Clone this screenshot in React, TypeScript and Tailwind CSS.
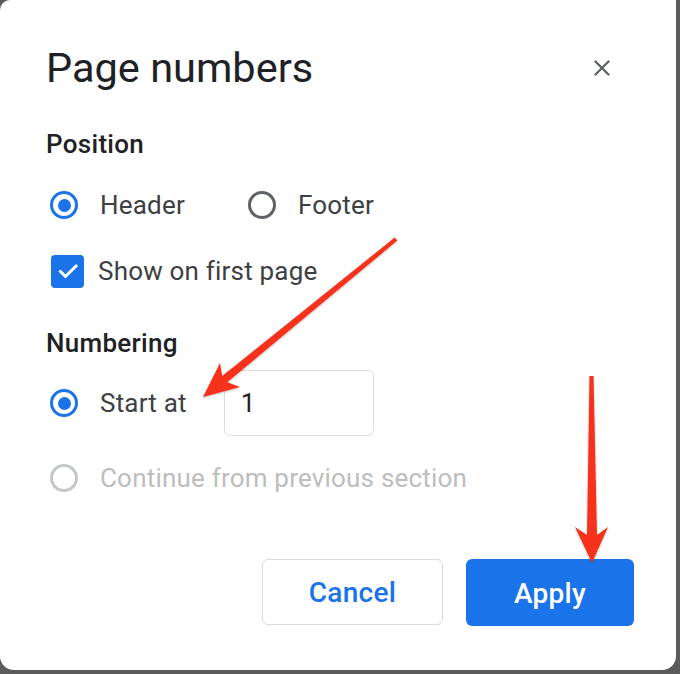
import { X } from "lucide-react";

function Radio({ state }: { state: "on" | "off" | "disabled" }) {
  const ring =
    state === "on"
      ? "border-[#1a73e8]"
      : state === "off"
      ? "border-[#5f6368]"
      : "border-[#c4c7c9]";
  return (
    <span
      className={`ml-[4px] flex h-[28px] w-[28px] shrink-0 items-center justify-center rounded-full border-[3px] ${ring}`}
    >
      {state === "on" && <span className="h-[13px] w-[13px] rounded-full bg-[#1a73e8]" />}
    </span>
  );
}

function Arrows() {
  return (
    <svg
      className="pointer-events-none absolute left-0 top-0"
      width="680"
      height="674"
      viewBox="0 0 680 674"
    >
      <defs>
        <filter id="sh" x="-10%" y="-10%" width="120%" height="120%">
          <feDropShadow dx="0" dy="1" stdDeviation="1" floodColor="#000" floodOpacity="0.25" />
        </filter>
      </defs>
      <g fill="#f7301c" filter="url(#sh)">
        <polygon points="394.7,237.5 397.3,240.6 227.2,382.3 240,387 203,397 220,363 222.2,376.1" />
        <polygon points="589.5,376 593.5,376 597,535 608,527 592,563 575,527 587,535" />
      </g>
    </svg>
  );
}

export default function App() {
  const font = { fontFamily: "Roboto, 'Noto Sans', sans-serif" };
  return (
    <div className="h-[674px] w-[680px] bg-[#5b5b5b]" style={font}>
      <div className="relative h-[670px] w-[676px] rounded-tl-[10px] rounded-b-[14px] bg-white pl-[46px] pr-[42px] pt-[44px]">
        <div className="flex items-center justify-between pr-[19px]">
          <h1 className="text-[41.5px] leading-[48px] text-[#202124]">Page numbers</h1>
          <X className="h-[26px] w-[26px] text-[#5f6368]" strokeWidth={2.2} />
        </div>

        <div className="mt-[38px] text-[26px] font-medium leading-[28px] tracking-[0.3px] text-[#202124]">
          Position
        </div>

        <div className="mt-[32px] flex h-[30px] items-center text-[26px] tracking-[0.2px] text-[#3c4043]">
          <Radio state="on" />
          <span className="ml-[22px]">Header</span>
          <span className="ml-[59px]">
            <Radio state="off" />
          </span>
          <span className="ml-[22px]">Footer</span>
        </div>

        <div className="mt-[34px] flex h-[34px] items-center text-[26px] tracking-[0.2px] text-[#3c4043]">
          <span className="ml-[5px] flex h-[33px] w-[33px] items-center justify-center rounded-[4px] bg-[#1a73e8]">
            <svg width="24" height="24" viewBox="0 0 24 24" fill="none">
              <path d="M4.5 12.5l5 5L20 7" stroke="white" strokeWidth="3" strokeLinecap="square" />
            </svg>
          </span>
          <span className="ml-[14px]">Show on first page</span>
        </div>

        <div className="mt-[41px] text-[26px] font-medium leading-[28px] tracking-[0.3px] text-[#202124]">
          Numbering
        </div>

        <div className="mt-[13px] flex h-[66px] items-center text-[26px] tracking-[0.2px] text-[#3c4043]">
          <Radio state="on" />
          <span className="ml-[22px]">Start at</span>
          <div className="ml-[37px] flex h-[66px] w-[150px] items-center rounded-[6px] border-[1.5px] border-[#dadce0] pl-[16px] text-[#202124]">
            1
          </div>
        </div>

        <div className="mt-[27px] flex h-[30px] items-center text-[26px] tracking-[0.2px] text-[#bdbdbd]">
          <Radio state="disabled" />
          <span className="ml-[22px]">Continue from previous section</span>
        </div>

        <div className="mt-[66px] flex justify-end gap-[23px]">
          <button className="h-[66px] w-[181px] rounded-[6px] border-[1.5px] border-[#dadce0] bg-white pt-[2px] text-[28px] font-medium tracking-[0.3px] text-[#1a73e8]">
            Cancel
          </button>
          <button className="h-[67px] w-[168px] rounded-[6px] bg-[#1a73e8] pt-[2px] text-[28px] font-medium tracking-[0.3px] text-white">
            Apply
          </button>
        </div>

        <Arrows />
      </div>
    </div>
  );
}
